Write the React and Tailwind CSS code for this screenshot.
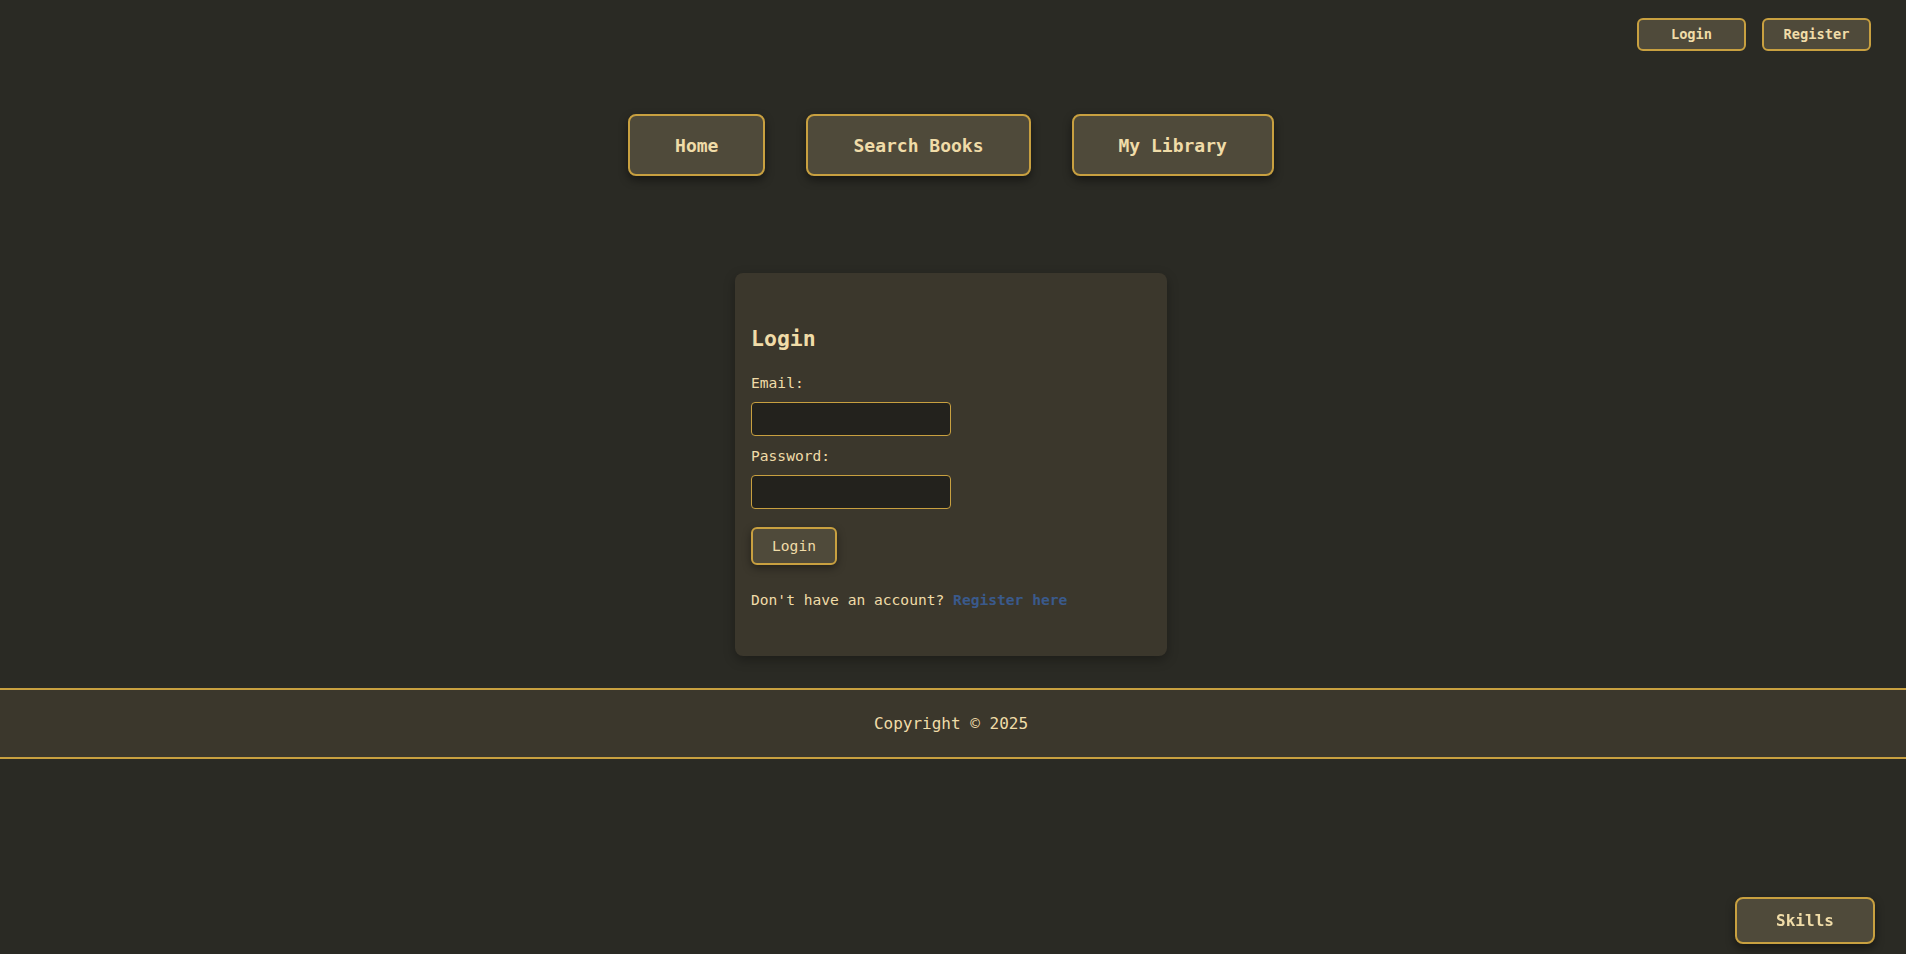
import React from 'react';

const mono = { fontFamily: '"DejaVu Sans Mono", "Liberation Mono", monospace' };

const App = () => {
  return (
    <div className="min-h-screen bg-[#2a2a24] text-[#f0dca8]" style={mono}>
      {/* Top auth buttons */}
      <div className="flex justify-end gap-4 pt-[18px] pr-[35px]">
        <button className="w-[109px] h-[33px] rounded-md border-2 border-[#c8a040] bg-[#4f4a3a] text-[13.7px] font-bold text-[#f0dca8]">
          Login
        </button>
        <button className="w-[109px] h-[33px] rounded-md border-2 border-[#c8a040] bg-[#4f4a3a] text-[13.7px] font-bold text-[#f0dca8]">
          Register
        </button>
      </div>

      {/* Nav */}
      <nav className="mt-[63px] flex justify-center gap-[41px] pr-[4px]">
        {['Home', 'Search Books', 'My Library'].map((label) => (
          <button
            key={label}
            className="h-[62px] px-[45px] rounded-lg border-2 border-[#c8a040] bg-[#4f4a3a] text-[18px] font-bold text-[#f0dca8] shadow-[0_4px_10px_rgba(0,0,0,0.45)]"
          >
            {label}
          </button>
        ))}
      </nav>

      {/* Login card */}
      <div className="mt-[97px] flex justify-center pr-[4px]">
        <div className="w-[432px] rounded-lg bg-[#3b372c] px-4 pt-[53px] pb-[47px] shadow-[0_4px_12px_rgba(0,0,0,0.3)]">
          <h2 className="text-[21.5px] leading-[26px] font-bold">Login</h2>
          <form className="mt-[22px] text-[14.6px] leading-[18px]">
            <label className="block mb-[10px]">Email:</label>
            <input
              type="email"
              className="block w-[200px] h-[34px] mb-[11px] rounded border border-[#c8a040] bg-[#23221d] px-2 text-[#f0dca8] outline-none"
            />
            <label className="block mb-[10px]">Password:</label>
            <input
              type="password"
              className="block w-[200px] h-[34px] rounded border border-[#c8a040] bg-[#23221d] px-2 text-[#f0dca8] outline-none"
            />
            <button
              type="button"
              className="mt-[18px] w-[86px] h-[38px] rounded-md border-2 border-[#c8a040] bg-[#4f4a3a] text-[14.6px] text-[#f0dca8] shadow-[0_3px_8px_rgba(0,0,0,0.4)]"
            >
              Login
            </button>
            <p className="mt-[26px]">
              Don't have an account?{' '}
              <a href="#" className="font-bold text-[#3a5a8c]">Register here</a>
            </p>
          </form>
        </div>
      </div>

      {/* Footer */}
      <footer className="mt-[32px] h-[71px] border-y-2 border-[#c8a040] bg-[#3b372c] flex items-center justify-center pr-[4px]">
        <p className="text-[16px]">Copyright © 2025</p>
      </footer>

      {/* Skills floating button */}
      <button className="fixed bottom-[10px] right-[31px] w-[140px] h-[47px] rounded-lg border-2 border-[#c8a040] bg-[#4f4a3a] text-[16px] font-bold text-[#f0dca8] shadow-[0_4px_10px_rgba(0,0,0,0.45)]">
        Skills
      </button>
    </div>
  );
};

export default App;
